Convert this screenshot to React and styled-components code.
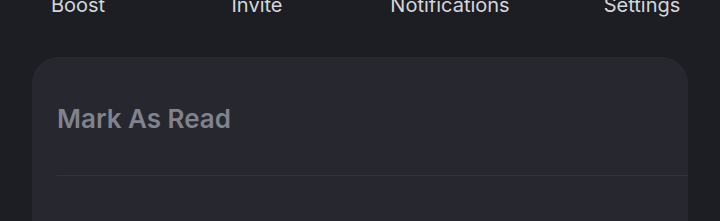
import React from "react";
import styled, { createGlobalStyle } from "styled-components";

const GlobalStyle = createGlobalStyle`
  html, body {
    margin: 0;
    padding: 0;
    background: #1d1e23;
    overflow: hidden;
  }
  body {
    font-family: Inter, "Noto Sans", sans-serif;
  }
`;

const Page = styled.div`
  width: 720px;
  height: 221px;
  overflow: hidden;
  background: #1d1e23;
`;

const ActionRow = styled.div`
  display: flex;
  margin-top: -7px;
  height: 24px;
`;

const Action = styled.div`
  width: ${props => props.width}px;
  flex: none;
  text-align: center;
  font-size: 20px;
  line-height: 24px;
  color: #d4d6dc;
  white-space: nowrap;
`;

const Card = styled.div`
  margin: 40px 32px 0 32px;
  background: #26272f;
  border-radius: 26px 26px 0 0;
  padding: 46px 0 0 25px;
  height: 200px;
`;

const Title = styled.h2`
  margin: 0;
  font-size: 26px;
  line-height: 32px;
  font-weight: 600;
  color: #80838d;
`;

const Divider = styled.div`
  margin-top: 40px;
  height: 1px;
  background: #31323b;
`;

const actions = [
  { label: "Boost", width: 156 },
  { label: "Invite", width: 202 },
  { label: "Notifications", width: 184 },
  { label: "Settings", width: 200 },
];

export default function App() {
  return (
    <Page>
      <GlobalStyle />
      <ActionRow>
        {actions.map(a => (
          <Action key={a.label} width={a.width}>
            {a.label}
          </Action>
        ))}
      </ActionRow>
      <Card>
        <Title>Mark As Read</Title>
        <Divider />
      </Card>
    </Page>
  );
}
